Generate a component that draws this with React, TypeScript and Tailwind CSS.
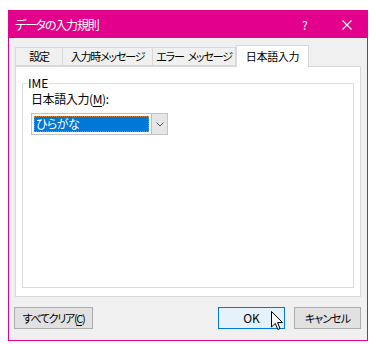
import React from 'react';

const font = "font-['Meiryo_UI','Noto_Sans_CJK_JP',sans-serif] [font-feature-settings:'palt']";

function Tab({ label, width, active }: { label: React.ReactNode; width: number; active?: boolean }) {
  if (active) {
    return (
      <div
        className="relative z-10 -mb-px flex h-[22px] items-center justify-center whitespace-nowrap border border-b-0 border-[#d9d9d9] bg-white text-[11px] tracking-[-0.3px] text-[#000]"
        style={{ width }}
      >
        {label}
      </div>
    );
  }
  return (
    <div
      className="flex h-[19px] items-center justify-center whitespace-nowrap border border-r-0 border-[#d9d9d9] bg-[#f0f0f0] text-[11px] tracking-[-1.2px] text-[#000]"
      style={{ width }}
    >
      {label}
    </div>
  );
}

function Cursor() {
  return (
    <svg width="13" height="20" viewBox="0 0 13 20" className="absolute left-[52px] top-[3px]">
      <path
        d="M0.5 0.5 L0.5 16 L4.3 12.4 L6.8 18.4 L9 17.5 L6.6 11.6 L11.6 11.6 Z"
        fill="#fff"
        stroke="#000"
        strokeWidth="1"
        strokeLinejoin="miter"
      />
    </svg>
  );
}

export default function App() {
  return (
    <div className={`h-[344px] w-[376px] bg-white pl-[8px] pt-[10px] ${font}`}>
      <div className="flex h-[331px] w-[360px] flex-col border border-[#e3008c] bg-[#f0f0f0]">
        {/* title bar */}
        <div className="flex h-[27px] items-center bg-[#e3008c] pl-[6px] text-[12px] text-white">
          <span className="flex-1 whitespace-nowrap tracking-[-1.2px]">データの入力規則</span>
          <span className="w-[14px] text-[12px]">?</span>
          <svg width="10" height="10" viewBox="0 0 10 10" className="ml-[26px] mr-[15px]">
            <path d="M0.5 0.5 L9.5 9.5 M9.5 0.5 L0.5 9.5" stroke="#fff" strokeWidth="1.1" />
          </svg>
        </div>

        {/* tabs */}
        <div className="ml-[6px] mt-[6px] flex h-[22px] items-end">
          <Tab label="設定" width={47} />
          <Tab label="入力時メッセージ" width={90} />
          <div className="border-r border-[#d9d9d9]">
            <Tab
              label={
                <>
                  エラー<span className="inline-block w-[4px]" />メッセージ
                </>
              }
              width={83}
            />
          </div>
          <Tab label="日本語入力" width={73} active />
        </div>

        {/* panel */}
        <div className="ml-[6px] h-[231px] w-[346px] border border-[#d9d9d9] bg-white px-[6px] pt-[9px]">
          <fieldset className="h-[212px] border border-[#dcdcdc] px-[8px]">
            <legend className="ml-[-4px] px-[1px] text-[12px] leading-[14px] text-[#000]">IME</legend>
            <div className="mt-[1px] whitespace-nowrap text-[12px] leading-[16px] tracking-[-0.4px] text-[#000]">
              日本語入力(<span className="underline underline-offset-2">M</span>):
            </div>
            <div className="mt-[6px] flex h-[22px] w-[137px] border border-[#c4c4c4] bg-white">
              <div className="m-[2px] flex flex-1 items-center border border-dotted border-[#d08040] bg-[#0078d7] pl-[1px] text-[12px] tracking-[-0.5px] text-white">
                ひらがな
              </div>
              <div className="flex w-[16px] items-center justify-center border-l border-[#bcbcbc] bg-[#e6e6e6]">
                <svg width="8" height="5" viewBox="0 0 8 5">
                  <path d="M0.5 0.5 L4 4 L7.5 0.5" fill="none" stroke="#555" strokeWidth="1" />
                </svg>
              </div>
            </div>
          </fieldset>
        </div>

        {/* buttons */}
        <div className="mt-[10px] flex h-[22px] pl-[5px]">
          <button className="h-[22px] w-[79px] whitespace-nowrap border border-[#adadad] bg-[#e1e1e1] text-[11px] tracking-[-1.3px] text-[#000]">
            すべてクリア(<span className="underline underline-offset-2">C</span>)
          </button>
          <div className="flex-1" />
          <button className="relative h-[22px] w-[67px] border border-[#0078d7] bg-[#e5f1fb] text-[12px] text-[#000]">
            OK
            <Cursor />
          </button>
          <button className="ml-[9px] mr-[6px] h-[22px] w-[67px] whitespace-nowrap border border-[#adadad] bg-[#e1e1e1] text-[11px] tracking-[-0.9px] text-[#000]">
            キャンセル
          </button>
        </div>
      </div>
    </div>
  );
}
